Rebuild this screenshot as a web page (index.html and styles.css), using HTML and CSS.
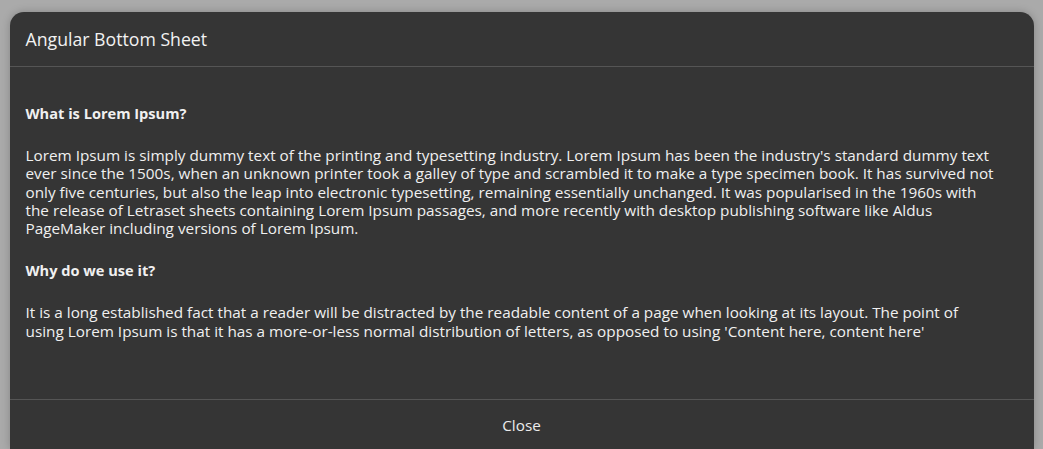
FILE: index.html
```html
<!DOCTYPE html>
<html lang="en">
<head>
<meta charset="utf-8">
<title>Angular Bottom Sheet</title>
<link rel="stylesheet" href="styles.css">
</head>
<body>
<div class="sheet">
  <header class="sheet-header">Angular Bottom Sheet</header>
  <main class="sheet-body">
    <h3 class="section-title">What is Lorem Ipsum?</h3>
    <p class="section-text">Lorem Ipsum is simply dummy text of the printing and typesetting industry. Lorem Ipsum has been the industry's standard dummy text<br>
    ever since the 1500s, when an unknown printer took a galley of type and scrambled it to make a type specimen book. It has survived not<br>
    only five centuries, but also the leap into electronic typesetting, remaining essentially unchanged. It was popularised in the 1960s with<br>
    the release of Letraset sheets containing Lorem Ipsum passages, and more recently with desktop publishing software like Aldus<br>
    PageMaker including versions of Lorem Ipsum.</p>
    <h3 class="section-title">Why do we use it?</h3>
    <p class="section-text">It is a long established fact that a reader will be distracted by the readable content of a page when looking at its layout. The point of<br>
    using Lorem Ipsum is that it has a more-or-less normal distribution of letters, as opposed to using 'Content here, content here'</p>
  </main>
  <footer class="sheet-footer">
    <button class="close-btn" type="button">Close</button>
  </footer>
</div>
</body>
</html>
```
FILE: styles.css
```css
html, body {
  margin: 0;
  padding: 0;
  height: 100%;
  overflow: hidden;
}
body {
  background: #aaaaaa;
  font-family: "Open Sans", "Noto Sans", sans-serif;
  color: #f0f0f0;
}
.sheet {
  width: 1024px;
  margin: 12px auto 0;
  height: 437px;
  background: #353535;
  border-radius: 14px 14px 0 0;
  box-shadow: 0 0 8px rgba(0, 0, 0, 0.22);
  display: flex;
  flex-direction: column;
  box-sizing: border-box;
}
.sheet-header {
  height: 54px;
  flex: none;
  display: flex;
  align-items: center;
  padding: 0 16px;
  font-size: 17.7px;
  color: #f2f2f2;
  border-bottom: 1px solid #555555;
}
.sheet-body {
  flex: 1;
  padding: 37px 16px 0;
}
.section-title {
  margin: 0 0 24px;
  font-size: 14.6px;
  line-height: 18px;
  font-weight: 700;
}
.section-text {
  margin: 0 0 24px;
  font-size: 15.3px;
  line-height: 18.3px;
}
.sheet-footer {
  flex: none;
  height: 49px;
  border-top: 1px solid #555555;
  display: flex;
  justify-content: center;
  align-items: center;
}
.close-btn {
  background: none;
  border: none;
  font-family: inherit;
  font-size: 15.3px;
  color: #ececec;
  padding: 8px 16px;
}
```
